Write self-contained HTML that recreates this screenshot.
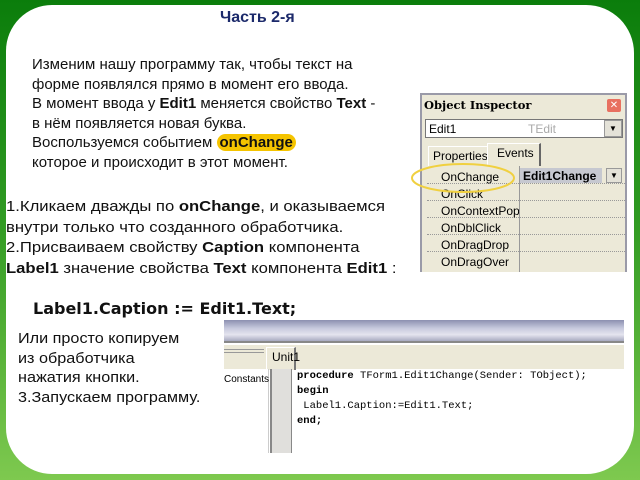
<!DOCTYPE html>
<html><head><meta charset="utf-8"><style>
*{margin:0;padding:0;box-sizing:border-box}
body{width:640px;height:480px;overflow:hidden;background:linear-gradient(#0b7d0b 0%,#2f9a22 45%,#7ec94f 100%);position:relative;font-family:"Liberation Sans",sans-serif}
.panel{position:absolute;left:6px;top:5px;width:628px;height:469px;background:#fff;border-radius:46px 48px 48px 46px}
.t{position:absolute;font-size:15px;color:#111;line-height:19.5px;white-space:nowrap;transform-origin:0 0}
b{font-weight:bold}
.hl{background:#f5c400;border-radius:10px;padding:0 3px}
.ab{position:absolute}
.ms{font-family:"Liberation Sans",sans-serif;font-size:11px;color:#000}
</style></head><body>
<div class="panel"></div>
<div class="t" style="left:220px;top:8px;color:#1c2a6b;font-weight:bold;font-size:16px">Часть 2-я</div>
<div class="t" style="left:32px;top:55px">Изменим нашу программу так, чтобы текст на<br>форме появлялся прямо в момент его ввода.<br>В момент ввода у <b>Edit1</b> меняется свойство <b>Text</b> -<br>в нём появляется новая буква.<br>Воспользуемся событием <b class="hl">onChange</b><br>которое и происходит в этот момент.</div>
<div class="t" style="left:6px;top:197px;line-height:20.5px;transform:scaleX(1.11)">1.Кликаем дважды по <b>onChange</b>, и оказываемся<br>внутри только что созданного обработчика.<br>2.Присваиваем свойству <b>Caption</b> компонента<br><b>Label1</b> значение свойства <b>Text</b> компонента <b>Edit1</b> :</div>
<div class="t" style="left:33px;top:299px;font-family:'DejaVu Sans',sans-serif;font-weight:bold;font-size:16px">Label1.Caption := Edit1.Text;</div>
<div class="t" style="left:18px;top:329px;transform:scaleX(1.08)">Или просто копируем<br>из обработчика<br>нажатия кнопки.<br>3.Запускаем программу.</div>

<!-- Object inspector -->
<div class="ab" style="left:420px;top:93px;width:207px;height:179px;background:#ece9d8;border:2px solid #9a9aa8;border-bottom:none"></div>
<div class="ab" style="left:424px;top:98px;font-family:'DejaVu Serif',serif;font-weight:bold;font-size:11.5px">Object Inspector</div>
<div class="ab" style="left:607px;top:99px;width:14px;height:13px;background:#e87060;border-radius:2px;color:#fff;font-size:10px;text-align:center;line-height:13px">✕</div>
<div class="ab" style="left:425px;top:119px;width:198px;height:19px;background:#fff;border:1px solid #777"></div>
<div class="ab ms" style="left:429px;top:122px;font-size:12px">Edit1</div>
<div class="ab ms" style="left:528px;top:122px;font-size:12px;color:#aaa">TEdit</div>
<div class="ab" style="left:604px;top:120px;width:18px;height:17px;background:#e4e2d8;border:1px solid #999;font-size:8px;text-align:center;line-height:15px">▼</div>
<div class="ab" style="left:428px;top:146px;width:87px;height:20px;border:1px solid #fff;border-bottom:none"></div>
<div class="ab ms" style="left:433px;top:149px;font-size:12px">Properties</div>
<div class="ab" style="left:487px;top:143px;width:54px;height:23px;background:#ece9d8;border:1px solid #fff;border-right:2px solid #666;border-bottom:none"></div>
<div class="ab ms" style="left:497px;top:146px;font-size:12px">Events</div>
<div class="ab" style="left:427px;top:166px;width:198px;height:106px;background:#ece9d8"></div>
<div class="ab" style="left:519px;top:166px;width:1px;height:106px;background:#999"></div>
<div class="ab" style="left:520px;top:168px;width:82px;height:15px;background:#c6c8d0"></div>
<div class="ab ms" style="left:523px;top:169px;font-weight:bold;font-size:12px">Edit1Change</div>
<div class="ab" style="left:606px;top:168px;width:16px;height:15px;background:#e4e2d8;border:1px solid #999;font-size:8px;text-align:center;line-height:13px">▼</div>
<div class="ab" style="left:427px;top:183px;width:198px;border-top:1px dotted #999"></div>
<div class="ab" style="left:427px;top:200px;width:198px;border-top:1px dotted #999"></div>
<div class="ab" style="left:427px;top:217px;width:198px;border-top:1px dotted #999"></div>
<div class="ab" style="left:427px;top:234px;width:198px;border-top:1px dotted #999"></div>
<div class="ab" style="left:427px;top:251px;width:198px;border-top:1px dotted #999"></div>
<div class="ab ms" style="left:441px;top:169px;font-size:12px;line-height:17px;width:78px;overflow:hidden">OnChange<br>OnClick<br>OnContextPopup<br>OnDblClick<br>OnDragDrop<br>OnDragOver</div>
<svg class="ab" style="left:408px;top:160px" width="110" height="36"><ellipse cx="55" cy="18" rx="51" ry="14" fill="none" stroke="#f0d040" stroke-width="2"/></svg>

<!-- code window -->
<div class="ab" style="left:224px;top:319px;width:400px;height:134px;background:#fff"></div>
<div class="ab" style="left:224px;top:320px;width:400px;height:23px;background:linear-gradient(#8c90b0,#c8cade 40%,#e4e4ee 70%,#a8aac0);border-bottom:2px solid #888"></div>
<div class="ab" style="left:224px;top:345px;width:400px;height:24px;background:#ece9d8"></div>
<div class="ab" style="left:224px;top:349px;width:40px;border-top:1px solid #999;border-bottom:1px solid #999;height:4px"></div>
<div class="ab" style="left:266px;top:347px;width:30px;height:23px;background:#ece9d8;border:1px solid #fff;border-right:2px solid #777;border-bottom:none"></div>
<div class="ab ms" style="left:272px;top:350px;font-size:12px">Unit1</div>
<div class="ab" style="left:224px;top:369px;width:45px;height:84px;background:#fff;border-right:1px solid #ccc"></div>
<div class="ab ms" style="left:224px;top:374px;font-size:10px">Constants</div>
<div class="ab" style="left:270px;top:369px;width:22px;height:84px;background:#e0dfdc;border-left:2px solid #888;border-right:1px solid #888"></div>
<div class="ab" style="left:297px;top:369px;font-family:'Liberation Mono',monospace;font-size:10.5px;line-height:15px;color:#000;white-space:pre"><b>procedure</b> TForm1.Edit1Change(Sender: TObject);
<b>begin</b>
 Label1.Caption:=Edit1.Text;
<b>end;</b></div>
</body></html>
